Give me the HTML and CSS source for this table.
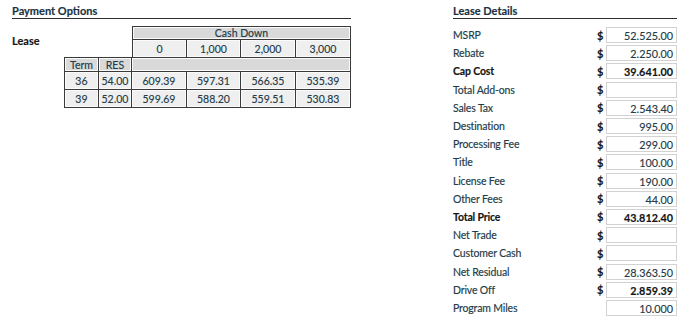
FILE: index.html
```html
<!DOCTYPE html>
<html>
<head>
<meta charset="utf-8">
<link rel="stylesheet" href="styles.css">
</head>
<body>
<div class="page">
  <section class="payment">
    <h2 class="title">Payment Options</h2>
    <div class="lease-wrap">
      <div class="lease-label">Lease</div>
      <table class="grid">
        <colgroup>
          <col class="w-term">
          <col class="w-res">
          <col class="w-a">
          <col class="w-b">
          <col class="w-a">
          <col class="w-a">
        </colgroup>
        <tr class="r-head1">
          <td class="blank" colspan="2"></td>
          <td class="hd first top" colspan="4">Cash Down</td>
        </tr>
        <tr class="r-head2">
          <td class="blank under" colspan="2"></td>
          <td class="dc first">0</td>
          <td class="dc">1,000</td>
          <td class="dc">2,000</td>
          <td class="dc">3,000</td>
        </tr>
        <tr class="r-head3">
          <td class="hd first">Term</td>
          <td class="hd">RES</td>
          <td class="hd" colspan="4"></td>
        </tr>
        <tr class="r-data">
          <td class="dc first">36</td>
          <td class="dc">54.00</td>
          <td class="dc">609.39</td>
          <td class="dc">597.31</td>
          <td class="dc">566.35</td>
          <td class="dc">535.39</td>
        </tr>
        <tr class="r-last">
          <td class="dc first">39</td>
          <td class="dc">52.00</td>
          <td class="dc">599.69</td>
          <td class="dc">588.20</td>
          <td class="dc">559.51</td>
          <td class="dc">530.83</td>
        </tr>
      </table>
    </div>
  </section>
  <section class="details">
    <h2 class="title">Lease Details</h2>
    <div class="rows">
      <div class="row"><span class="lbl">MSRP</span><span class="cur">$</span><span class="box">52.525.00</span></div>
      <div class="row"><span class="lbl">Rebate</span><span class="cur">$</span><span class="box">2.250.00</span></div>
      <div class="row strong"><span class="lbl">Cap Cost</span><span class="cur">$</span><span class="box">39.641.00</span></div>
      <div class="row"><span class="lbl">Total Add-ons</span><span class="cur">$</span><span class="box"></span></div>
      <div class="row"><span class="lbl">Sales Tax</span><span class="cur">$</span><span class="box">2.543.40</span></div>
      <div class="row"><span class="lbl">Destination</span><span class="cur">$</span><span class="box">995.00</span></div>
      <div class="row"><span class="lbl">Processing Fee</span><span class="cur">$</span><span class="box">299.00</span></div>
      <div class="row"><span class="lbl">Title</span><span class="cur">$</span><span class="box">100.00</span></div>
      <div class="row"><span class="lbl">License Fee</span><span class="cur">$</span><span class="box">190.00</span></div>
      <div class="row"><span class="lbl">Other Fees</span><span class="cur">$</span><span class="box">44.00</span></div>
      <div class="row strong"><span class="lbl">Total Price</span><span class="cur">$</span><span class="box">43.812.40</span></div>
      <div class="row"><span class="lbl">Net Trade</span><span class="cur">$</span><span class="box"></span></div>
      <div class="row"><span class="lbl">Customer Cash</span><span class="cur">$</span><span class="box"></span></div>
      <div class="row"><span class="lbl">Net Residual</span><span class="cur">$</span><span class="box">28.363.50</span></div>
      <div class="row boldval"><span class="lbl">Drive Off</span><span class="cur">$</span><span class="box">2.859.39</span></div>
      <div class="row"><span class="lbl">Program Miles</span><span class="cur"></span><span class="box">10.000</span></div>
    </div>
  </section>
</div>
</body>
</html>
```

FILE: styles.css
```css
html, body {
  margin: 0;
  padding: 0;
  background: #ffffff;
}

body {
  font-family: Lato, "Open Sans", sans-serif;
  font-size: 10.5px;
  color: #223b48;
  -webkit-text-stroke: 0.15px;
}

.page {
  display: flex;
  justify-content: space-between;
  padding: 0 13px 0 12px;
}

.title {
  margin: 0;
  padding-top: 4px;
  height: 14px;
  font-size: 11px;
  font-weight: bold;
  color: #1a3242;
  line-height: 14px;
  border-bottom: 1px solid #2e2e2e;
}

.payment {
  width: 339px;
}

.lease-wrap {
  display: flex;
  margin-top: 7px;
}

.lease-label {
  width: 52px;
  padding-top: 8px;
  font-size: 11px;
  font-weight: bold;
  color: #151515;
}

.grid {
  border-collapse: separate;
  border-spacing: 0;
  table-layout: fixed;
  width: 287px;
  font-size: 10.5px;
  color: #223b48;
}

.w-term { width: 35px; }
.w-res { width: 33px; }
.w-a { width: 55px; }
.w-b { width: 54px; }

.grid td {
  padding: 0;
  text-align: center;
  vertical-align: middle;
  border-right: 1px solid #3a3a3a;
  border-bottom: 1px solid #3a3a3a;
  box-shadow: inset 0 0 0 1px #fbfbfb;
  line-height: 12px;
}

.grid td.first { border-left: 1px solid #3a3a3a; }
.grid td.top { border-top: 1px solid #3a3a3a; }

.grid td.blank {
  border: none;
  box-shadow: none;
}

.grid td.blank.under {
  border-bottom: 1px solid #3a3a3a;
}

.grid td.hd { background: #d9d9d9; }
.grid td.dc { background: #efefef; }

.r-head1 td { height: 11px; }
.r-head2 td { height: 17px; }
.r-head3 td { height: 13px; }
.r-data td { height: 17px; }
.r-last td { height: 17px; }

.details {
  width: 224px;
}

.rows {
  padding-top: 7px;
}

.row {
  display: flex;
  align-items: center;
  height: 18.2px;
  letter-spacing: -0.15px;
}

.lbl {
  flex: 1;
}

.cur {
  width: 9px;
  font-size: 11px;
  font-weight: bold;
  color: #151515;
}

.box {
  width: 66px;
  height: 14px;
  border: 1px solid #d2d2d2;
  text-align: right;
  padding-right: 3px;
  font-size: 10.8px;
  line-height: 16px;
  letter-spacing: 0;
  color: #223b48;
}

.strong .lbl {
  font-weight: bold;
  color: #151515;
}

.strong .box, .boldval .box {
  font-weight: bold;
  color: #151515;
}
```
